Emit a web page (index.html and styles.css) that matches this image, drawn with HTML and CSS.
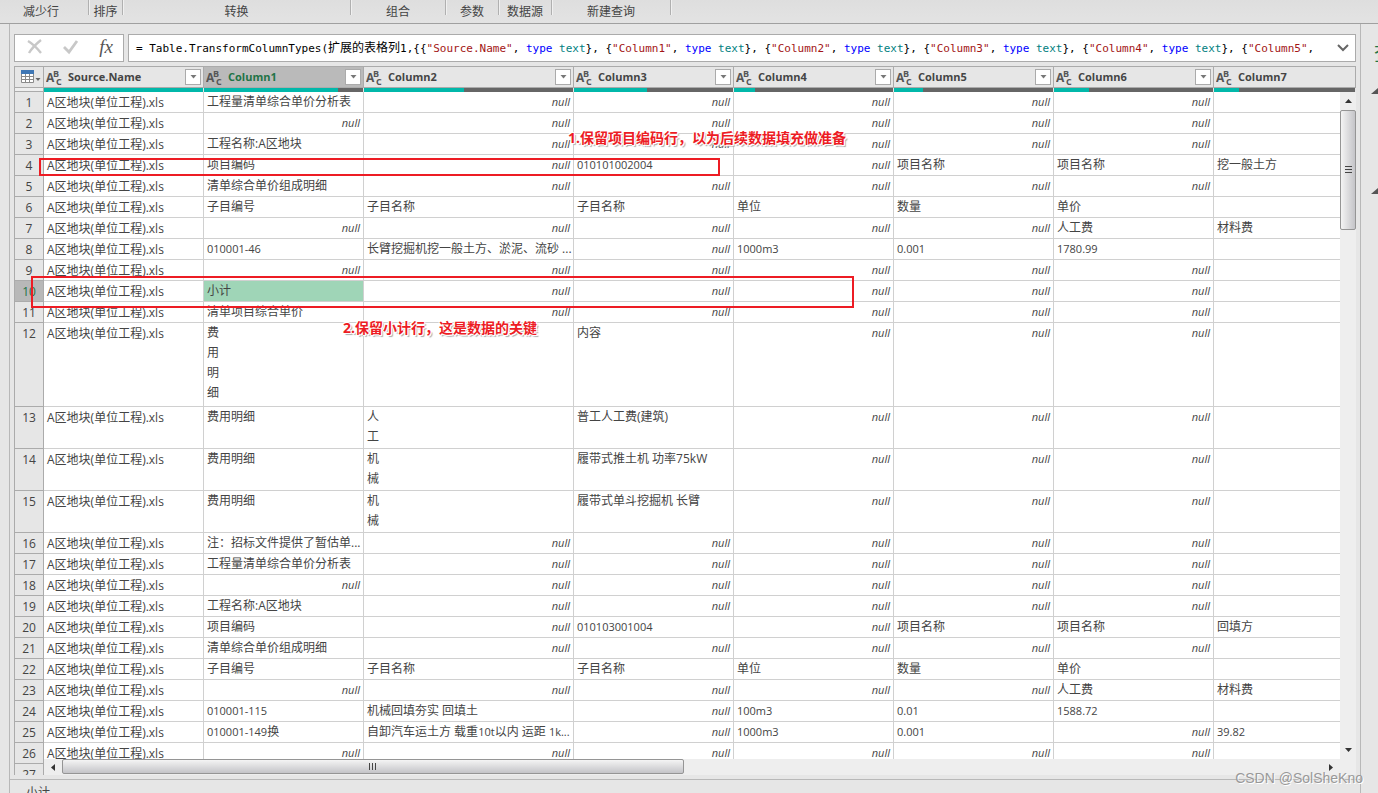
FILE: index.html
```html
<!DOCTYPE html>
<html lang="zh-CN">
<head>
<meta charset="utf-8">
<title>Power Query 编辑器</title>
<link rel="stylesheet" href="styles.css">
</head>
<body>
<svg class="defs" aria-hidden="true">
  <symbol id="abc" viewBox="0 0 18 18">
    <text x="0" y="14" class="abc-a">A</text><text x="7" y="9" class="abc-s">B</text><text x="10" y="17" class="abc-s">C</text>
  </symbol>
  <symbol id="caret" viewBox="0 0 7 4"><path d="M.5 0h6L3.500 3.500z" fill="#777"/></symbol>
</svg>
<div class="app">
  <header class="ribbon">
    <span class="group g-rows">减少行</span><span class="group g-sort">排序</span><span class="group g-transform">转换</span><span class="group g-combine">组合</span><span class="group g-small">参数</span><span class="group g-small">数据源</span><span class="group g-new">新建查询</span>
  </header>
  <div class="workspace">
    <main class="editor">
      <div class="formula-bar">
        <div class="formula-tools">
          <button type="button" aria-label="取消"><svg width="16" height="16" viewBox="0 0 16 16"><path d="M1 2c5 3 9 7 13 12M14 1C9 5 5 9 2 14" fill="none" stroke="#c8c8c8" stroke-width="2.400"/></svg></button>
          <button type="button" aria-label="确认"><svg width="16" height="16" viewBox="0 0 16 16"><path d="M1 8l5 5L14 2" fill="none" stroke="#c8c8c8" stroke-width="2.800"/></svg></button>
          <button type="button" class="fx" aria-label="添加步骤">fx</button>
        </div>
        <div class="formula-box">
          <div class="formula" role="textbox" aria-label="公式" contenteditable="true" spellcheck="false">= Table.TransformColumnTypes(<span class="cjk">扩展的表格列</span>1,{{<i class="s">"Source.Name"</i>, <i class="k">type</i> <i class="t">text</i>}, {<i class="s">"Column1"</i>, <i class="k">type</i> <i class="t">text</i>}, {<i class="s">"Column2"</i>, <i class="k">type</i> <i class="t">text</i>}, {<i class="s">"Column3"</i>, <i class="k">type</i> <i class="t">text</i>}, {<i class="s">"Column4"</i>, <i class="k">type</i> <i class="t">text</i>}, {<i class="s">"Column5"</i>,</div>
          <button type="button" class="expand" aria-label="展开"><svg width="12" height="8" viewBox="0 0 12 8"><path d="M1 1l5 5 5-5" fill="none" stroke="#666" stroke-width="2"/></svg></button>
        </div>
      </div>
      <div class="grid">
        <table>
          <colgroup><col class="c-idx"><col class="c-std"><col class="c-std"><col class="c-wide"><col class="c-std"><col class="c-std"><col class="c-std"><col class="c-std"><col></colgroup>
          <thead>
            <tr class="heads">
              <th><button type="button" class="corner" aria-label="表选项"><svg width="20" height="14" viewBox="0 0 20 14"><path d="M.5.5h12v12H.5z" fill="#fff" stroke="#8a8a8a"/><path d="M0 0h13v4H0z" fill="#3f77b5"/><path d="M4.500 4v9M8.500 4v9M0 6.500h13M0 9.500h13" stroke="#8a8a8a" fill="none"/><path d="M14.500 8h5L17 11z" fill="#666"/></svg></button></th>
              <th><div class="head"><svg class="type"><use href="#abc"/></svg><span>Source.Name</span><button type="button" class="filter" aria-label="筛选 Source.Name"><svg width="7" height="4"><use href="#caret"/></svg></button></div></th>
              <th class="picked"><div class="head"><svg class="type"><use href="#abc"/></svg><span>Column1</span><button type="button" class="filter" aria-label="筛选 Column1"><svg width="7" height="4"><use href="#caret"/></svg></button></div></th>
              <th><div class="head"><svg class="type"><use href="#abc"/></svg><span>Column2</span><button type="button" class="filter" aria-label="筛选 Column2"><svg width="7" height="4"><use href="#caret"/></svg></button></div></th>
              <th><div class="head"><svg class="type"><use href="#abc"/></svg><span>Column3</span><button type="button" class="filter" aria-label="筛选 Column3"><svg width="7" height="4"><use href="#caret"/></svg></button></div></th>
              <th><div class="head"><svg class="type"><use href="#abc"/></svg><span>Column4</span><button type="button" class="filter" aria-label="筛选 Column4"><svg width="7" height="4"><use href="#caret"/></svg></button></div></th>
              <th><div class="head"><svg class="type"><use href="#abc"/></svg><span>Column5</span><button type="button" class="filter" aria-label="筛选 Column5"><svg width="7" height="4"><use href="#caret"/></svg></button></div></th>
              <th><div class="head"><svg class="type"><use href="#abc"/></svg><span>Column6</span><button type="button" class="filter" aria-label="筛选 Column6"><svg width="7" height="4"><use href="#caret"/></svg></button></div></th>
              <th><div class="head"><svg class="type"><use href="#abc"/></svg><span>Column7</span></div></th>
            </tr>
            <tr class="quality">
              <td></td>
              <td><div class="bar"><div style="width:100%"></div></div></td>
              <td><div class="bar"><div style="width:84%"></div></div></td>
              <td><div class="bar"><div style="width:48%"></div></div></td>
              <td><div class="bar"><div style="width:46%"></div></div></td>
              <td><div class="bar"><div style="width:13%"></div></div></td>
              <td><div class="bar"><div style="width:18%"></div></div></td>
              <td><div class="bar"><div style="width:22%"></div></div></td>
              <td><div class="bar"><div style="width:18%"></div></div></td>
            </tr>
          </thead>
          <tbody>
            <tr><th>1<td>A区地块(单位工程).xls<td>工程量清单综合单价分析表<td class="null">null<td class="null">null<td class="null">null<td class="null">null<td class="null">null<td></tr>
            <tr><th>2<td>A区地块(单位工程).xls<td class="null">null<td class="null">null<td class="null">null<td class="null">null<td class="null">null<td class="null">null<td></tr>
            <tr><th>3<td>A区地块(单位工程).xls<td>工程名称:A区地块<td class="null">null<td class="null">null<td class="null">null<td class="null">null<td class="null">null<td></tr>
            <tr><th>4<td>A区地块(单位工程).xls<td>项目编码<td class="null">null<td class="num">010101002004<td class="null">null<td>项目名称<td>项目名称<td>挖一般土方</tr>
            <tr><th>5<td>A区地块(单位工程).xls<td>清单综合单价组成明细<td class="null">null<td class="null">null<td class="null">null<td class="null">null<td class="null">null<td></tr>
            <tr><th>6<td>A区地块(单位工程).xls<td>子目编号<td>子目名称<td>子目名称<td>单位<td>数量<td>单价<td></tr>
            <tr><th>7<td>A区地块(单位工程).xls<td class="null">null<td class="null">null<td class="null">null<td class="null">null<td class="null">null<td>人工费<td>材料费</tr>
            <tr><th>8<td>A区地块(单位工程).xls<td class="num">010001-46<td>长臂挖掘机挖一般土方、淤泥、流砂 ...<td class="null">null<td class="num">1000m3<td class="num">0.001<td class="num">1780.99<td></tr>
            <tr><th>9<td>A区地块(单位工程).xls<td class="null">null<td class="null">null<td class="null">null<td class="null">null<td class="null">null<td class="null">null<td></tr>
            <tr><th class="picked">10<td>A区地块(单位工程).xls<td class="selected">小计<td class="null">null<td class="null">null<td class="null">null<td class="null">null<td class="null">null<td></tr>
            <tr><th>11<td>A区地块(单位工程).xls<td>清单项目综合单价<td class="null">null<td class="null">null<td class="null">null<td class="null">null<td class="null">null<td></tr>
            <tr class="four"><th>12<td>A区地块(单位工程).xls<td>费<br>用<br>明<br>细<td><td>内容<td class="null">null<td class="null">null<td class="null">null<td></tr>
            <tr class="two"><th>13<td>A区地块(单位工程).xls<td>费用明细<td>人<br>工<td>普工人工费(建筑)<td class="null">null<td class="null">null<td class="null">null<td></tr>
            <tr class="two"><th>14<td>A区地块(单位工程).xls<td>费用明细<td>机<br>械<td>履带式推土机 功率75kW<td class="null">null<td class="null">null<td class="null">null<td></tr>
            <tr class="two"><th>15<td>A区地块(单位工程).xls<td>费用明细<td>机<br>械<td>履带式单斗挖掘机 长臂<td class="null">null<td class="null">null<td class="null">null<td></tr>
            <tr><th>16<td>A区地块(单位工程).xls<td>注：招标文件提供了暂估单...<td class="null">null<td class="null">null<td class="null">null<td class="null">null<td class="null">null<td></tr>
            <tr><th>17<td>A区地块(单位工程).xls<td>工程量清单综合单价分析表<td class="null">null<td class="null">null<td class="null">null<td class="null">null<td class="null">null<td></tr>
            <tr><th>18<td>A区地块(单位工程).xls<td class="null">null<td class="null">null<td class="null">null<td class="null">null<td class="null">null<td class="null">null<td></tr>
            <tr><th>19<td>A区地块(单位工程).xls<td>工程名称:A区地块<td class="null">null<td class="null">null<td class="null">null<td class="null">null<td class="null">null<td></tr>
            <tr><th>20<td>A区地块(单位工程).xls<td>项目编码<td class="null">null<td class="num">010103001004<td class="null">null<td>项目名称<td>项目名称<td>回填方</tr>
            <tr><th>21<td>A区地块(单位工程).xls<td>清单综合单价组成明细<td class="null">null<td class="null">null<td class="null">null<td class="null">null<td class="null">null<td></tr>
            <tr><th>22<td>A区地块(单位工程).xls<td>子目编号<td>子目名称<td>子目名称<td>单位<td>数量<td>单价<td></tr>
            <tr><th>23<td>A区地块(单位工程).xls<td class="null">null<td class="null">null<td class="null">null<td class="null">null<td class="null">null<td>人工费<td>材料费</tr>
            <tr><th>24<td>A区地块(单位工程).xls<td class="num">010001-115<td>机械回填夯实 回填土<td class="null">null<td class="num">100m3<td class="num">0.01<td class="num">1588.72<td></tr>
            <tr><th>25<td>A区地块(单位工程).xls<td class="num">010001-149<span class="cjk">换</span><td>自卸汽车运土方 载重<span class="num">10t</span>以内 运距 <span class="num">1k...</span><td class="null">null<td class="num">1000m3<td class="num">0.001<td class="null">null<td class="num">39.82</tr>
            <tr><th>26<td>A区地块(单位工程).xls<td class="null">null<td class="null">null<td class="null">null<td class="null">null<td class="null">null<td class="null">null<td></tr>
            <tr><th>27<td><td><td><td><td><td><td><td></tr>
          </tbody>
        </table>
        <div class="vscroll">
          <button type="button" aria-label="向上"><svg width="7" height="4" viewBox="0 0 7 4"><path d="M0 4h7L3.500 0z" fill="#333"/></svg></button>
          <div class="thumb"><svg width="7" height="8" viewBox="0 0 7 8"><path d="M0 .5h7M0 3.500h7M0 6.500h7" stroke="#444"/></svg></div>
          <button type="button" aria-label="向下"><svg width="7" height="4" viewBox="0 0 7 4"><path d="M0 0h7L3.500 4z" fill="#333"/></svg></button>
        </div>
        <div class="hscroll">
          <button type="button" aria-label="向左"><svg width="4" height="7" viewBox="0 0 4 7"><path d="M4 0v7L0 3.500z" fill="#333"/></svg></button>
          <div class="thumb"><svg width="8" height="7" viewBox="0 0 8 7"><path d="M.5 0v7M3.500 0v7M6.500 0v7" stroke="#444"/></svg></div>
          <button type="button" aria-label="向右"><svg width="4" height="7" viewBox="0 0 4 7"><path d="M0 0v7L4 3.500z" fill="#333"/></svg></button>
        </div>
      </div>
      <footer class="preview">小计</footer>
    </main>
    <aside class="settings">
      <h2>查询设置</h2>
      <svg width="7" height="7" viewBox="0 0 7 7"><path d="M7 0v6H0z" fill="#555"/></svg>
      <svg width="7" height="7" viewBox="0 0 7 7"><path d="M7 0v6H0z" fill="#555"/></svg>
    </aside>
  </div>
  <div class="mark mark-code"></div>
  <div class="mark mark-total"></div>
  <p class="note note-code">1.保留项目编码行，以为后续数据填充做准备</p>
  <p class="note note-total">2.保留小计行，这是数据的关键</p>
  <p class="watermark">CSDN @SolSheKno</p>
</div>
</body>
</html>
```
FILE: styles.css
```css
* { box-sizing: border-box; }
body {
  margin: 0;
  background: #e6e6e6;
  color: #444;
  font: 12px/20px "Open Sans", "Noto Sans CJK SC", sans-serif;
}
button {
  display: flex;
  align-items: center;
  justify-content: center;
  margin: 0;
  padding: 0;
  border: 0;
  background: none;
  color: inherit;
}
.defs { position: absolute; width: 0; height: 0; }
.app {
  position: relative;
  display: flex;
  flex-direction: column;
  height: 100vh;
  overflow: hidden;
}

.ribbon {
  display: flex;
  flex: 0 0 24px;
  background: linear-gradient(#dedede, #e3e3e3);
  border-bottom: 1px solid #a0a0a0;
}
.group {
  height: 15px;
  border-right: 1px solid #b0b0b0;
  box-shadow: 1px 0 #f0f0f0;
  text-align: center;
  line-height: 23px;
  white-space: nowrap;
}
.g-rows { width: 89px; padding-right: 6px; }
.g-sort { width: 34px; }
.g-transform { width: 228px; }
.g-combine { width: 95px; }
.g-small { width: 53px; }
.g-new { width: 119px; }

.workspace { display: flex; flex: 1; min-height: 0; padding-left: 9px; }
.editor {
  display: flex;
  flex: 1;
  flex-direction: column;
  min-width: 0;
  border: 1px solid #b8b8b8;
  border-width: 0 1px;
}
.formula-bar { display: flex; gap: 4px; padding: 10px 4px 4px; }
.formula-tools, .formula-box {
  display: flex;
  align-items: center;
  height: 28px;
  border: 1px solid #ababab;
  background: #fff;
}
.formula-tools { flex: 0 0 110px; justify-content: space-between; padding: 0 9px 2px 12px; }
.fx { width: 16px; font: italic 19px/20px "Liberation Serif", serif; color: #555; }
.formula-box { flex: 1; min-width: 0; padding-right: 5px; }
.formula {
  flex: 1;
  min-width: 0;
  overflow: hidden;
  padding-left: 7px;
  color: #000;
  font: 11px/20px "DejaVu Sans Mono", "Noto Sans CJK SC", monospace;
  white-space: nowrap;
}
.formula i { font-style: normal; }
.cjk { font-size: 12px; }
.formula .s { color: #a31515; }
.formula .k { color: #00f; }
.formula .t { color: #008080; }
.expand { width: 14px; height: 20px; }

.grid {
  position: relative;
  flex: 1;
  min-height: 0;
  margin: 0 4px 4px;
  overflow: hidden;
}
table {
  width: 100%;
  border-spacing: 0;
  table-layout: fixed;
}
.c-idx { width: 30px; }
.c-std { width: 160px; }
.c-wide { width: 210px; }
th, td { padding: 0; overflow: hidden; vertical-align: top; white-space: nowrap; }
th { background: #e6e6e6; }
.heads th {
  height: 22px;
  border: 1px solid #ababab;
  border-left-width: 0;
  font-size: 11px;
}
.heads th:first-child { border-left-width: 1px; }
.corner { width: 28px; height: 20px; padding-left: 4px; }
.head { display: flex; align-items: center; height: 20px; padding: 0 2px; }
.head span { flex: 1; padding-left: 4px; text-align: left; }
.type { width: 18px; height: 18px; fill: #555; }
.abc-a { font: 700 12px "Open Sans", sans-serif; }
.abc-s { font: 700 9px "Open Sans", sans-serif; }
.filter { width: 16px; height: 16px; border: 1px solid #ababab; background: #fff; }
.heads .picked { background: #bababa; color: #217346; }
.quality td { height: 4px; line-height: 0; }
.quality td:first-child { border: 1px solid #ababab; border-top: 0; background: #eee; }
.bar { height: 4px; margin-right: 1px; background: #666; }
.bar div { height: 4px; background: #01b8aa; }
tbody th {
  height: 21px;
  border: 1px solid #ababab;
  border-top: 0;
  font-weight: 400;
}
tbody td {
  height: 21px;
  padding: 0 3px;
  border: 1px solid #d0d0d0;
  border-width: 0 1px 1px 0;
  background: #fff;
}
tbody th, tbody th + td { padding-top: 2px; line-height: 18px; }
tbody .picked { background: #b8b8b8; color: #217346; }
tbody .selected { background: #9fd5b7; }
.num { font-size: 11px; }
.null { font-size: 11px; font-style: italic; text-align: right; }
.two > * { height: 42px; }
.four > * { height: 84px; }

.vscroll, .hscroll {
  position: absolute;
  display: flex;
  background: #eee;
}
.vscroll { top: 26px; right: 0; bottom: 16px; flex-direction: column; width: 16px; }
.hscroll { right: 0; bottom: 0; left: 30px; height: 16px; padding-right: 16px; }
.vscroll button { flex: 0 0 18px; }
.hscroll button { flex: 0 0 18px; }
.thumb {
  display: flex;
  align-items: center;
  justify-content: center;
  border: 1px solid #959595;
  border-radius: 2px;
}
.vscroll .thumb { flex: 0 0 18%; background: linear-gradient(90deg, #f4f4f4, #dcdcde 50%, #c4c4c8); }
.hscroll .thumb { flex: 0 0 48%; height: 15px; background: linear-gradient(#f4f4f4, #dcdcde 50%, #c4c4c8); }
.thumb + button { margin-top: auto; }
.hscroll .thumb + button { margin: 0 0 0 auto; }

.preview {
  flex: 0 0 14px;
  overflow: hidden;
  padding-left: 16px;
  border-top: 1px solid #b8b8b8;
  line-height: 26px;
}
.settings { flex: 0 0 17px; overflow: hidden; padding: 20px 0 0 10px; }
.settings svg { display: block; margin-bottom: 93px; }
.settings h2 {
  margin: 0 0 24px;
  padding-left: 3px;
  color: #217346;
  font-size: 20px;
  font-weight: 400;
  line-height: 20px;
  white-space: nowrap;
}

.mark { position: absolute; border: 2px solid #ed1c24; }
.mark-code { top: 158px; left: 39px; width: 681px; height: 18px; }
.mark-total { top: 276px; left: 31px; width: 823px; height: 32px; }
.note {
  position: absolute;
  margin: 0;
  color: #ed1c24;
  font-size: 14px;
  font-weight: 700;
  text-shadow: 1px 0 #fff, -1px 0 #fff, 0 1px #fff, 0 -1px #fff, 1px 1px #fff, -1px -1px #fff, 2px 2px 1px #aaa;
  white-space: nowrap;
}
.note-code { top: 128px; left: 568px; }
.note-total { top: 318px; left: 343px; }
.watermark {
  position: absolute;
  right: 15px;
  bottom: 5px;
  margin: 0;
  color: #999;
  font: 14px/20px "Liberation Sans", sans-serif;
  text-shadow: 1px 1px #fff;
}
```
